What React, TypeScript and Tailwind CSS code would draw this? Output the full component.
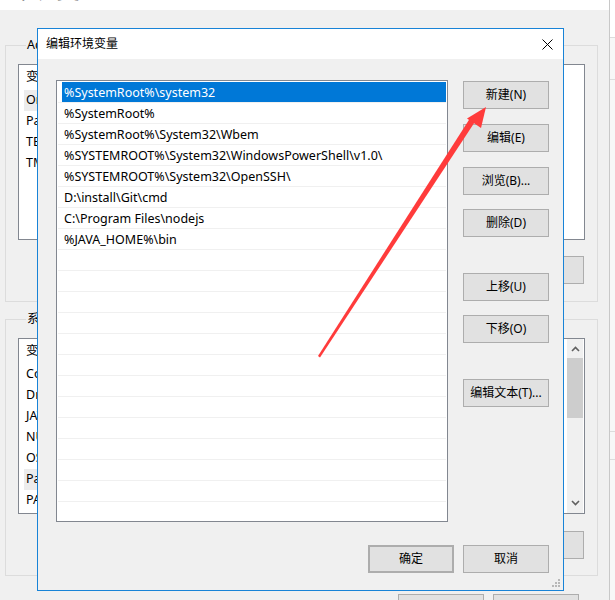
import React from 'react';

const font = { fontFamily: '"Noto Sans", "Noto Sans CJK SC", sans-serif' };

const pathItems = [
  '%SystemRoot%\\system32',
  '%SystemRoot%',
  '%SystemRoot%\\System32\\Wbem',
  '%SYSTEMROOT%\\System32\\WindowsPowerShell\\v1.0\\',
  '%SYSTEMROOT%\\System32\\OpenSSH\\',
  'D:\\install\\Git\\cmd',
  'C:\\Program Files\\nodejs',
  '%JAVA_HOME%\\bin',
];

const userVars = ['OneDrive', 'Path', 'TEMP', 'TMP'];
const sysVars = ['ComSpec', 'DriverData', 'JAVA_HOME', 'NUMBER_OF_PROCESSORS', 'OS', 'Path', 'PATHEXT'];

function WinButton({ label, className = '' }: { label?: string; className?: string }) {
  return (
    <div
      className={`w-[86px] h-[28px] shrink-0 bg-[#e1e1e1] border border-[#adadad] flex items-center justify-center text-[12px] text-black ${className}`}
    >
      {label}
    </div>
  );
}

function VarList({ items, selected, scroll }: { items: string[]; selected: number; scroll?: boolean }) {
  return (
    <div className="w-[567px] h-[176px] bg-white border border-[#828790] flex overflow-hidden">
      <div className="flex-1 flex flex-col">
        <div className="h-[25px] shrink-0 pl-[7px] flex items-center text-[12.5px]">变量</div>
        {items.map((v, i) => (
          <div key={v} className="h-[21px] shrink-0 flex items-center">
            <div className={`ml-[5px] pl-[2px] h-full flex items-center text-[12.5px] ${i === selected ? 'bg-[#ececec] w-[200px]' : ''}`}>
              {v}
            </div>
          </div>
        ))}
      </div>
      {scroll && (
        <div className="w-[16px] mr-[1px] bg-[#f0f0f0] flex flex-col items-center">
          <svg width="9" height="17" viewBox="0 0 9 17" className="mt-[2px]">
            <path d="M1 10 L4.5 6.5 L8 10" stroke="#606060" strokeWidth="1.6" fill="none" />
          </svg>
          <div className="w-[16px] h-[60px] bg-[#cdcdcd]" />
          <div className="flex-1" />
          <svg width="9" height="17" viewBox="0 0 9 17" className="mb-[2px]">
            <path d="M1 7 L4.5 10.5 L8 7" stroke="#606060" strokeWidth="1.6" fill="none" />
          </svg>
        </div>
      )}
    </div>
  );
}

function GroupBox({ legend, children, className = '' }: { legend: string; children: React.ReactNode; className?: string }) {
  return (
    <fieldset className={`ml-[5px] w-[593px] border border-[#dcdcdc] px-[12px] ${className}`}>
      <legend className="ml-[8px] px-[1px] text-[12.5px] leading-[16px] text-black">{legend}</legend>
      {children}
    </fieldset>
  );
}

function Dialog() {
  return (
    <div className="absolute left-[37px] top-[28px] w-[527px] h-[563px] border border-[#1883d7] bg-[#f0f0f0] flex flex-col">
      {/* title bar */}
      <div className="h-[30px] shrink-0 bg-white flex items-center justify-between pl-[8px] pr-[10px]">
        <span className="text-[12px] text-black">编辑环境变量</span>
        <svg width="11" height="11" viewBox="0 0 11 11">
          <path d="M0.5 0.5 L10.5 10.5 M10.5 0.5 L0.5 10.5" stroke="#000" strokeWidth="1" />
        </svg>
      </div>

      {/* body */}
      <div className="flex pl-[18px]">
        <div className="mt-[21px] w-[392px] h-[442px] bg-white border border-[#828790] pt-[1px] overflow-hidden">
          {Array.from({ length: 21 }).map((_, i) => {
            const text = pathItems[i];
            return (
              <div key={i} className="mx-[1px] h-[21px] border-b border-[#f0f0f0]">
                {i === 0 ? (
                  <div className="ml-[4px] h-[20px] bg-[#0078d7] text-white text-[12.5px] leading-[21px] pl-[2px]">{text}</div>
                ) : (
                  <div className="ml-[4px] h-[20px] text-black text-[12.5px] leading-[21px] pl-[2px]">{text}</div>
                )}
              </div>
            );
          })}
        </div>

        <div className="ml-[15px] flex flex-col">
          <WinButton label="新建(N)" className="mt-[22px]" />
          <WinButton label="编辑(E)" className="mt-[15px]" />
          <WinButton label="浏览(B)..." className="mt-[15px]" />
          <WinButton label="删除(D)" className="mt-[14px]" />
          <WinButton label="上移(U)" className="mt-[36px]" />
          <WinButton label="下移(O)" className="mt-[14px]" />
          <WinButton label="编辑文本(T)..." className="mt-[36px]" />
        </div>
      </div>

      <div className="mt-[23px] flex justify-end gap-[9px] pr-[14px]">
        <WinButton label="确定" className="border-2 border-[#0078d7]" />
        <WinButton label="取消" />
      </div>

      {/* resize grip */}
      <svg width="8" height="8" viewBox="0 0 8 8" className="absolute right-[3px] bottom-[3px]">
        <rect x="6" y="0" width="2" height="2" fill="#b8b8b8" />
        <rect x="3" y="3" width="2" height="2" fill="#b8b8b8" />
        <rect x="6" y="3" width="2" height="2" fill="#b8b8b8" />
        <rect x="0" y="6" width="2" height="2" fill="#b8b8b8" />
        <rect x="3" y="6" width="2" height="2" fill="#b8b8b8" />
        <rect x="6" y="6" width="2" height="2" fill="#b8b8b8" />
      </svg>
    </div>
  );
}

export default function App() {
  return (
    <div className="relative w-[615px] h-[600px] overflow-hidden bg-[#f0f0f0] flex text-black" style={font}>
      {/* parent window */}
      <div className="w-[609px] flex flex-col">
        <div className="h-[10px] bg-white overflow-hidden shrink-0">
          <div className="ml-[8px] -mt-[26px] text-[24px] leading-[30px] text-[#333]">环境变量</div>
        </div>

        <GroupBox legend="Administrator 的用户变量(U)" className="mt-[27px] pt-[11px] pb-[17px]">
          <VarList items={userVars} selected={0} />
          <div className="flex justify-end mt-[16px] pr-[1px]">
            <WinButton label="删除(D)" />
          </div>
        </GroupBox>

        <GroupBox legend="系统变量(S)" className="mt-[9px] pt-[11px] pb-[16px]">
          <VarList items={sysVars} selected={5} scroll />
          <div className="flex justify-end mt-[17px] pr-[1px]">
            <WinButton label="删除(L)" />
          </div>
        </GroupBox>

        <div className="mt-[18px] flex justify-end gap-[9px] pr-[30px]">
          <WinButton />
          <WinButton />
        </div>
      </div>

      {/* neighbouring window edge */}
      <div className="w-[1px] bg-[#c8c8c8]" />
      <div className="flex-1 flex flex-col bg-[#f7f7f7]">
        <div className="h-[38px] bg-white border-b border-[#dcdcdc]" />
        <div className="h-[42px] border-b border-[#dcdcdc]" />
        <div className="h-[352px] border-b border-[#dcdcdc]" />
        <div className="h-[28px] border-b border-[#dcdcdc]" />
      </div>

      <Dialog />

      {/* red annotation arrow */}
      <svg width="615" height="600" className="absolute left-0 top-0 pointer-events-none">
        <polygon points="318,356 320,357.5 475.5,121 470.5,117.5" fill="#ff3b3b" />
        <polygon points="486,107 467,118.5 481,128" fill="#ff3b3b" />
      </svg>
    </div>
  );
}
